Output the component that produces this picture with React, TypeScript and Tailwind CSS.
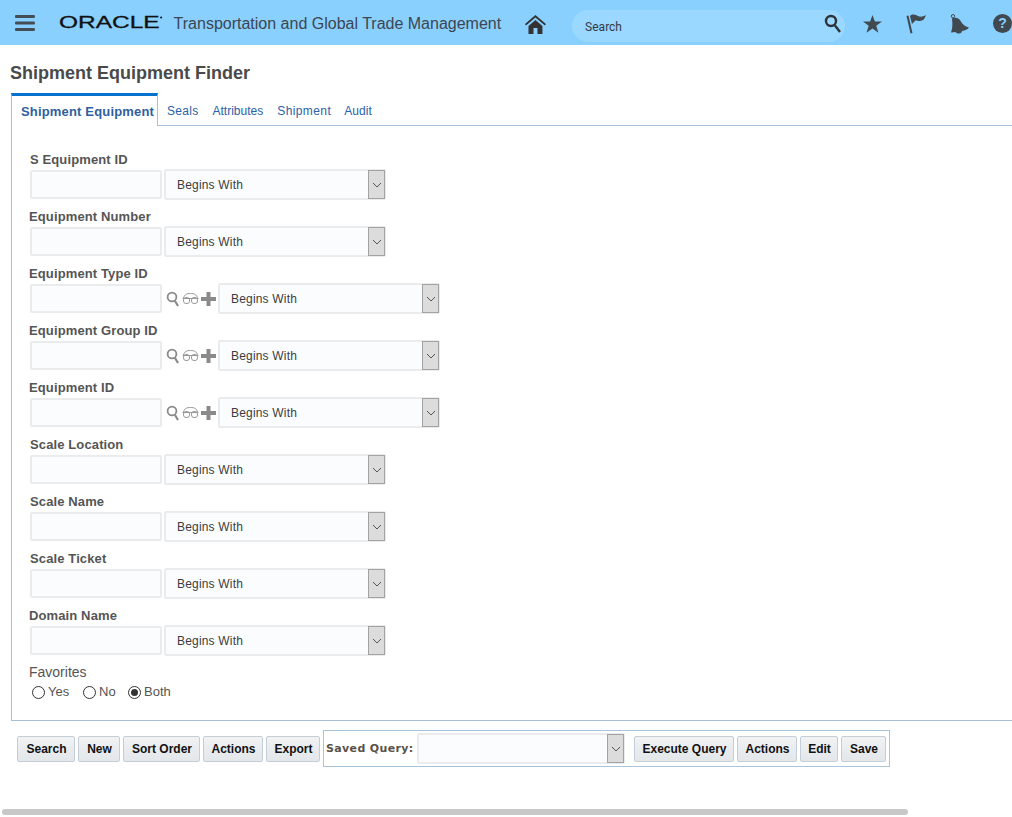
import React from 'react';

const SANS = "font-['Liberation_Sans',Arial,sans-serif]";

const rows = [
  { label: 'S Equipment ID', tools: false, indent: 'pl-[30px]' },
  { label: 'Equipment Number', tools: false, indent: 'pl-[29px]' },
  { label: 'Equipment Type ID', tools: true, indent: 'pl-[29px]' },
  { label: 'Equipment Group ID', tools: true, indent: 'pl-[29px]' },
  { label: 'Equipment ID', tools: true, indent: 'pl-[29px]' },
  { label: 'Scale Location', tools: false, indent: 'pl-[30px]' },
  { label: 'Scale Name', tools: false, indent: 'pl-[30px]' },
  { label: 'Scale Ticket', tools: false, indent: 'pl-[30px]' },
  { label: 'Domain Name', tools: false, indent: 'pl-[29px]' },
];

const Chevron = () => (
  <svg width="10" height="6" viewBox="0 0 10 6" fill="none">
    <path d="M1 1l4 4 4-4" stroke="#555" strokeWidth="1" />
  </svg>
);

// Faux select: pale field with the grey arrow block on the right
const Select: React.FC<{ width: string; text?: string }> = ({ width, text }) => (
  <div className={`${width} h-[31px] flex border-2 border-[#e9ebed] rounded-[2px] bg-[#fbfcfe]`}>
    <div className="flex-1 pl-[11px] flex items-center text-[12px] tracking-[0.18px] text-[#3c3c3c]">{text}</div>
    <div className="w-[17px] -my-[1px] -mr-[1px] bg-[#dcdcdc] border border-[#a2a2a2] flex items-center justify-center">
      <Chevron />
    </div>
  </div>
);

const Btn: React.FC<{ width: string; children: string }> = ({ width, children }) => (
  <button className={`${width} h-[26px] shrink-0 pl-[1px] rounded-[2px] border border-[#c3ced9] bg-gradient-to-b from-[#f0f2f4] to-[#e3e7ea] text-[12px] font-bold text-[#111] flex items-center justify-center`}>
    {children}
  </button>
);

const LookupIcons = () => (
  <div className="w-[56px] flex items-center pl-[4px] gap-[2px]">
    <svg width="14" height="16" viewBox="0 0 14 16" fill="none">
      <circle cx="6" cy="6" r="4.400" stroke="#8a8a8a" strokeWidth="1.800" />
      <path d="M9 10l3 5" stroke="#8a8a8a" strokeWidth="2.200" />
    </svg>
    <svg width="17" height="13" viewBox="0 0 17 13" fill="none" stroke="#9a9a9a" strokeWidth="1">
      <rect x="1.500" y="5.500" width="6" height="6" rx="2.500" />
      <rect x="9.500" y="5.500" width="6" height="6" rx="2.500" />
      <path d="M0.500 6.500h16M1.500 6C2.500 2.500 4.500 1.500 8.500 1.500S14.500 2.500 15.500 6" />
    </svg>
    <svg width="15" height="14" viewBox="0 0 15 14">
      <path d="M5.500 0h4v5H15v4H9.500v5h-4V9H0V5h5.500z" fill="#8a8a8a" />
    </svg>
  </div>
);

const Radio: React.FC<{ label: string; checked?: boolean; width: string }> = ({ label, checked, width }) => (
  <div className={`${width} flex items-center`}>
    <span className="w-[13px] h-[13px] rounded-full border border-[#333] bg-white flex items-center justify-center">
      {checked && <span className="w-[7px] h-[7px] rounded-full bg-[#333]" />}
    </span>
    <span className="ml-[3px] text-[13px] text-[#555]">{label}</span>
  </div>
);

export default function App() {
  return (
    <div className={`${SANS} w-[1012px] h-[817px] overflow-hidden bg-white`}>
      {/* Header */}
      <header className="h-[45px] bg-[#8ad0ff] flex items-center text-[#404a52]">
        <svg className="ml-[15px]" width="20" height="16" viewBox="0 0 20 16" fill="#454d54">
          <rect width="20" height="3" rx="1" />
          <rect y="6.500" width="20" height="3" rx="1" />
          <rect y="13" width="20" height="3" rx="1" />
        </svg>
        <svg className="ml-[24px]" width="104" height="20" viewBox="0 0 104 20">
          <text x="0" y="15" fontSize="17" fontFamily="Liberation Sans" fill="#111" stroke="#111" strokeWidth="0.3" textLength="101" lengthAdjust="spacingAndGlyphs">ORACLE</text>
          <circle cx="102.500" cy="4.500" r="1" fill="#111" />
        </svg>
        <span className="ml-[11px] mt-[3px] text-[16px] text-[#3c4650] w-[328px] whitespace-nowrap">Transportation and Global Trade Management</span>
        <svg className="ml-[24px] mt-[3px]" width="21" height="19" viewBox="0 0 21 19">
          <path d="M10.500 0L0 9l1 1.500L10.500 2.500 20 10.500 21 9z" fill="#333" />
          <path d="M3.500 11l7-6 7 6v8h-5v-6h-4v6h-5z" fill="#333" />
        </svg>
        <div className="ml-[26px] mt-[7px] w-[274px] h-[32px] rounded-[16px] bg-[#9ad8ff] flex items-center justify-between pl-[13px] pr-[3px]">
          <span className="pt-[2px] font-['Roboto',sans-serif] text-[12px] text-[#333a44]">Search</span>
          <svg width="18" height="20" viewBox="0 0 18 20" fill="none" className="-mt-[4px]">
            <circle cx="7" cy="7" r="5" stroke="#2d3338" strokeWidth="2.400" />
            <path d="M11 11.500l5 6.500" stroke="#2d3338" strokeWidth="2.400" />
          </svg>
        </div>
        <svg className="ml-[18px] mt-[2px]" width="19" height="18" viewBox="0 0 20 19">
          <path d="M10 0l2.500 6.800H20l-6 4.500 2.300 7.500L10 14.300 3.700 18.800 6 11.300 0 6.800h7.500z" fill="#404850" />
        </svg>
        <svg className="ml-[24px] mt-[2px]" width="20" height="20" viewBox="0 0 20 20" fill="#404850">
          <path d="M0.500 2l2-.5L6.500 19l-2 .5z" />
          <path d="M4 2c3-3 6-1 8 0s5 1 8-1c-1 4-3 6-6 6s-4-1-5 0-2 2-3 3z" />
        </svg>
        <svg className="ml-[24px] mt-[3px]" width="19" height="20" viewBox="0 0 19 20" fill="#404850">
          <circle cx="3" cy="2.200" r="1.700" fill="none" stroke="#404850" strokeWidth="1" />
          <path d="M2 4.500C5.500 2.500 9.500 4 11 7.500c1 2.500 4 5 8 6-1 2-4 3-7 3.500 0 1.500-1 2.500-3 2.500-1.500 0-3-.5-3.500-1.500-1.500.3-3 .5-4.500.5 1.500-4 1.800-9 1-13.500z" />
        </svg>
        <div className="ml-[24px] mt-[2px] w-[19px] h-[19px] shrink-0 rounded-full bg-[#404850] text-[#8ad0ff] text-[14px] font-bold flex items-center justify-center">?</div>
      </header>

      {/* Title */}
      <h1 className="pl-[10px] pt-[18px] h-[48px] text-[18px] leading-[21px] font-bold text-[#4a4a4a]">Shipment Equipment Finder</h1>

      {/* Tabs */}
      <div className="ml-[11px] h-[33px] flex border-b border-[#a8c0d8] text-[12px] text-[#2a62a8]">
        <div className="w-[147px] h-[33px] border-t-[3px] border-x border-t-[#0572ce] border-x-[#a8c0d8] bg-white pl-[9px] pt-[6px] text-[13px] tracking-[0.17px] leading-[20px] font-bold text-[#2f5f9e] whitespace-nowrap">Shipment Equipment</div>
        <div className="pl-[9px] pt-[8px] leading-[20px] tracking-[0.3px]">Seals</div>
        <div className="pl-[14px] pt-[8px] leading-[20px]">Attributes</div>
        <div className="pl-[14px] pt-[8px] leading-[20px] tracking-[0.4px]">Shipment</div>
        <div className="pl-[13px] pt-[8px] leading-[20px] tracking-[0.1px]">Audit</div>
      </div>

      {/* Query form */}
      <div className="ml-[11px] h-[595px] border-l border-b border-[#a8c0d8] pt-[25px]">
        {rows.map(row => (
          <div key={row.label} className="h-[57px] -ml-[12px]">
            <div className={`${row.indent} h-[18px] text-[13px] tracking-[0.12px] leading-[17px] font-bold text-[#555]`}>{row.label}</div>
            <div className="pl-[30px] flex items-center h-[31px]">
              <input className="w-[132px] h-[29px] border-2 border-[#e9ebed] rounded-[2px] bg-[#fbfcfe]" />
              {row.tools ? <LookupIcons /> : <div className="w-[2px]" />}
              <Select width="w-[222px]" text="Begins With" />
            </div>
          </div>
        ))}
        <div className="-ml-[12px] pl-[29px] h-[18px] text-[14px] leading-[17px] text-[#555]">Favorites</div>
        <div className="-ml-[12px] pl-[32px] h-[20px] flex items-center">
          <Radio label="Yes" width="w-[51px]" />
          <Radio label="No" width="w-[45px]" />
          <Radio label="Both" width="w-[60px]" checked />
        </div>
      </div>

      {/* Action buttons */}
      <div className="pl-[17px] pt-[9px] flex items-center gap-[3px]">
        <Btn width="w-[58px]">Search</Btn>
        <Btn width="w-[42px]">New</Btn>
        <Btn width="w-[77px]">Sort Order</Btn>
        <Btn width="w-[60px]">Actions</Btn>
        <Btn width="w-[54px]">Export</Btn>
        <div className="w-[567px] h-[37px] border border-[#a8c4dc] flex items-center pl-[2px]">
          <span className="w-[91px] pt-[1px] font-['DejaVu_Sans',sans-serif] text-[11px] tracking-[0.35px] font-bold text-[#5a5248] whitespace-nowrap">Saved Query:</span>
          <Select width="w-[208px]" />
          <div className="ml-[9px] flex gap-[3px]">
            <Btn width="w-[100px]">Execute Query</Btn>
            <Btn width="w-[60px]">Actions</Btn>
            <Btn width="w-[38px]">Edit</Btn>
            <Btn width="w-[45px]">Save</Btn>
          </div>
        </div>
      </div>

      {/* Horizontal scrollbar */}
      <div className="ml-[2px] mt-[42px] w-[906px] h-[6px] rounded-[3px] bg-[#c8c8c8]" />
    </div>
  );
}
